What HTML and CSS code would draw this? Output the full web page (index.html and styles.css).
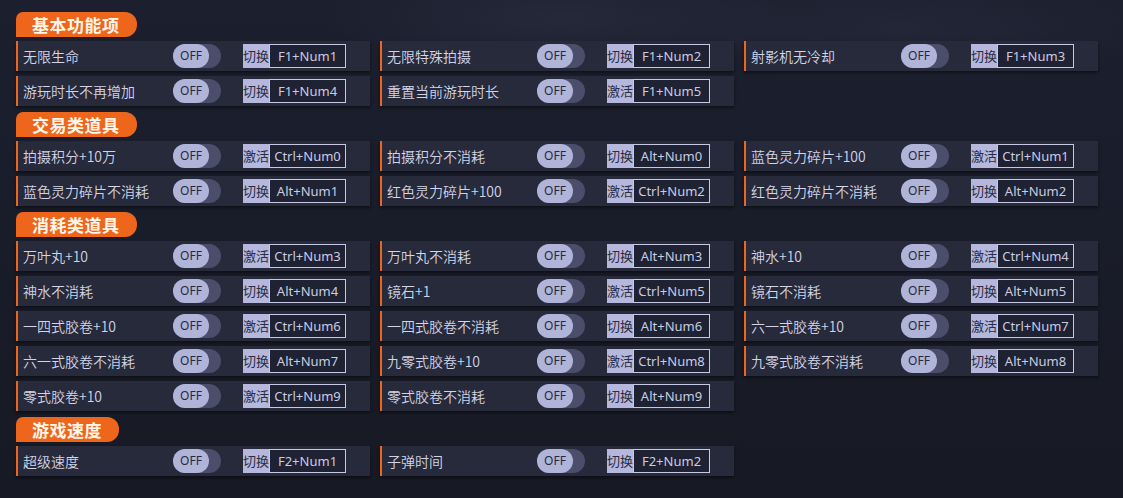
FILE: index.html
```html
<!DOCTYPE html>
<html lang="zh">
<head>
<meta charset="utf-8">
<link rel="stylesheet" href="styles.css">
</head>
<body>
<div class="page">
  <section class="section">
    <h2 class="title">基本功能项</h2>
    <div class="grid">
      <div class="row"><span class="label">无限生命</span><span class="toggle"><span class="knob">OFF</span></span><span class="key"><span class="mode">切换</span><span class="combo">F1+Num1</span></span></div>
      <div class="row"><span class="label">无限特殊拍摄</span><span class="toggle"><span class="knob">OFF</span></span><span class="key"><span class="mode">切换</span><span class="combo">F1+Num2</span></span></div>
      <div class="row"><span class="label">射影机无冷却</span><span class="toggle"><span class="knob">OFF</span></span><span class="key"><span class="mode">切换</span><span class="combo">F1+Num3</span></span></div>
      <div class="row"><span class="label">游玩时长不再增加</span><span class="toggle"><span class="knob">OFF</span></span><span class="key"><span class="mode">切换</span><span class="combo">F1+Num4</span></span></div>
      <div class="row"><span class="label">重置当前游玩时长</span><span class="toggle"><span class="knob">OFF</span></span><span class="key"><span class="mode">激活</span><span class="combo">F1+Num5</span></span></div>
    </div>
  </section>
  <section class="section">
    <h2 class="title">交易类道具</h2>
    <div class="grid">
      <div class="row"><span class="label">拍摄积分+10万</span><span class="toggle"><span class="knob">OFF</span></span><span class="key"><span class="mode">激活</span><span class="combo">Ctrl+Num0</span></span></div>
      <div class="row"><span class="label">拍摄积分不消耗</span><span class="toggle"><span class="knob">OFF</span></span><span class="key"><span class="mode">切换</span><span class="combo">Alt+Num0</span></span></div>
      <div class="row"><span class="label">蓝色灵力碎片+100</span><span class="toggle"><span class="knob">OFF</span></span><span class="key"><span class="mode">激活</span><span class="combo">Ctrl+Num1</span></span></div>
      <div class="row"><span class="label">蓝色灵力碎片不消耗</span><span class="toggle"><span class="knob">OFF</span></span><span class="key"><span class="mode">切换</span><span class="combo">Alt+Num1</span></span></div>
      <div class="row"><span class="label">红色灵力碎片+100</span><span class="toggle"><span class="knob">OFF</span></span><span class="key"><span class="mode">激活</span><span class="combo">Ctrl+Num2</span></span></div>
      <div class="row"><span class="label">红色灵力碎片不消耗</span><span class="toggle"><span class="knob">OFF</span></span><span class="key"><span class="mode">切换</span><span class="combo">Alt+Num2</span></span></div>
    </div>
  </section>
  <section class="section">
    <h2 class="title">消耗类道具</h2>
    <div class="grid">
      <div class="row"><span class="label">万叶丸+10</span><span class="toggle"><span class="knob">OFF</span></span><span class="key"><span class="mode">激活</span><span class="combo">Ctrl+Num3</span></span></div>
      <div class="row"><span class="label">万叶丸不消耗</span><span class="toggle"><span class="knob">OFF</span></span><span class="key"><span class="mode">切换</span><span class="combo">Alt+Num3</span></span></div>
      <div class="row"><span class="label">神水+10</span><span class="toggle"><span class="knob">OFF</span></span><span class="key"><span class="mode">激活</span><span class="combo">Ctrl+Num4</span></span></div>
      <div class="row"><span class="label">神水不消耗</span><span class="toggle"><span class="knob">OFF</span></span><span class="key"><span class="mode">切换</span><span class="combo">Alt+Num4</span></span></div>
      <div class="row"><span class="label">镜石+1</span><span class="toggle"><span class="knob">OFF</span></span><span class="key"><span class="mode">激活</span><span class="combo">Ctrl+Num5</span></span></div>
      <div class="row"><span class="label">镜石不消耗</span><span class="toggle"><span class="knob">OFF</span></span><span class="key"><span class="mode">切换</span><span class="combo">Alt+Num5</span></span></div>
      <div class="row"><span class="label">一四式胶卷+10</span><span class="toggle"><span class="knob">OFF</span></span><span class="key"><span class="mode">激活</span><span class="combo">Ctrl+Num6</span></span></div>
      <div class="row"><span class="label">一四式胶卷不消耗</span><span class="toggle"><span class="knob">OFF</span></span><span class="key"><span class="mode">切换</span><span class="combo">Alt+Num6</span></span></div>
      <div class="row"><span class="label">六一式胶卷+10</span><span class="toggle"><span class="knob">OFF</span></span><span class="key"><span class="mode">激活</span><span class="combo">Ctrl+Num7</span></span></div>
      <div class="row"><span class="label">六一式胶卷不消耗</span><span class="toggle"><span class="knob">OFF</span></span><span class="key"><span class="mode">切换</span><span class="combo">Alt+Num7</span></span></div>
      <div class="row"><span class="label">九零式胶卷+10</span><span class="toggle"><span class="knob">OFF</span></span><span class="key"><span class="mode">激活</span><span class="combo">Ctrl+Num8</span></span></div>
      <div class="row"><span class="label">九零式胶卷不消耗</span><span class="toggle"><span class="knob">OFF</span></span><span class="key"><span class="mode">切换</span><span class="combo">Alt+Num8</span></span></div>
      <div class="row"><span class="label">零式胶卷+10</span><span class="toggle"><span class="knob">OFF</span></span><span class="key"><span class="mode">激活</span><span class="combo">Ctrl+Num9</span></span></div>
      <div class="row"><span class="label">零式胶卷不消耗</span><span class="toggle"><span class="knob">OFF</span></span><span class="key"><span class="mode">切换</span><span class="combo">Alt+Num9</span></span></div>
    </div>
  </section>
  <section class="section">
    <h2 class="title">游戏速度</h2>
    <div class="grid">
      <div class="row"><span class="label">超级速度</span><span class="toggle"><span class="knob">OFF</span></span><span class="key"><span class="mode">切换</span><span class="combo">F2+Num1</span></span></div>
      <div class="row"><span class="label">子弹时间</span><span class="toggle"><span class="knob">OFF</span></span><span class="key"><span class="mode">切换</span><span class="combo">F2+Num2</span></span></div>
    </div>
  </section>
</div>
</body>
</html>
```
FILE: styles.css
```css
html, body {
  margin: 0;
  padding: 0;
}
body {
  width: 1123px;
  height: 498px;
  overflow: hidden;
  background:
    radial-gradient(ellipse 240px 60px at 560px 18px, rgba(60, 66, 90, 0.28), rgba(0,0,0,0)),
    radial-gradient(ellipse 280px 55px at 900px 28px, rgba(55, 60, 84, 0.25), rgba(0,0,0,0)),
    linear-gradient(180deg, #1c1f2d 0%, #1a1d2b 30%, #171924 100%);
  font-family: "Noto Sans", "Noto Sans CJK SC", sans-serif;
  color: #cfd1e6;
}
.page {
  padding: 12px 0 0 16px;
  display: flex;
  flex-direction: column;
  gap: 6px;
}
.section {
  display: flex;
  flex-direction: column;
  align-items: flex-start;
  gap: 4px;
}
.title {
  margin: 0;
  height: 25px;
  line-height: 25px;
  padding: 0 17px 0 16px;
  background: #ee661c;
  color: #fff6ea;
  font-family: "Noto Sans CJK SC", sans-serif;
  font-weight: 700;
  font-size: 17px;
  letter-spacing: 0.5px;
  border-radius: 7px 12px 12px 0;
}
.grid {
  display: grid;
  grid-template-columns: repeat(3, 354px);
  column-gap: 10px;
  row-gap: 5px;
}
.row {
  height: 30px;
  box-sizing: border-box;
  display: flex;
  align-items: center;
  background: #262a3b;
  border-left: 2px solid #ee661c;
  box-shadow: 0 2px 3px rgba(0, 0, 0, 0.45);
  padding-left: 5px;
}
.label {
  width: 150px;
  flex: none;
  font-size: 14px;
  color: #d2d4e8;
  white-space: nowrap;
  font-family: "Noto Sans CJK SC", sans-serif;
  font-weight: 350;
}
.toggle {
  flex: none;
  width: 48px;
  height: 24px;
  border-radius: 12px;
  background: #4b4e6b;
  display: flex;
}
.knob {
  width: 36px;
  height: 24px;
  border-radius: 12px;
  background: #b1b4d9;
  color: #272a3e;
  font-size: 12px;
  line-height: 24px;
  text-align: center;
  font-family: "Noto Sans", sans-serif;
}
.key {
  flex: none;
  margin-left: 22px;
  display: flex;
  height: 24px;
}
.mode {
  width: 26px;
  background: #b5b7dc;
  color: #2b2d42;
  font-size: 13px;
  line-height: 24px;
  text-align: center;
  white-space: nowrap;
  overflow: hidden;
  font-family: "Noto Sans CJK SC", sans-serif;
}
.combo {
  width: 77px;
  box-sizing: border-box;
  border: 1px solid #c6c8e4;
  background: #1f2232;
  color: #c9cbe2;
  font-size: 13px;
  line-height: 22px;
  text-align: center;
  font-family: "Noto Sans", sans-serif;
}
```
